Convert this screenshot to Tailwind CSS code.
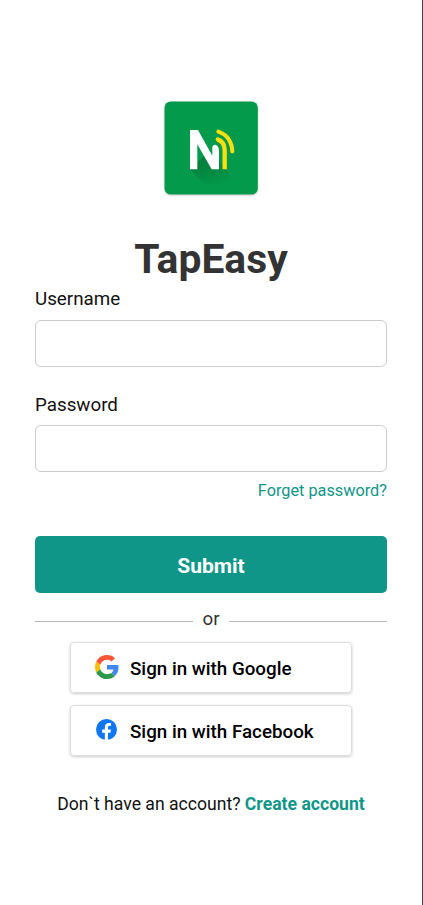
<!DOCTYPE html>
<html lang="en">
<head>
    <meta charset="UTF-8">
    <meta name="viewport" content="width=device-width, initial-scale=1.0">
    <title>TapEasy</title>
    <script src="https://cdn.jsdelivr.net/npm/@tailwindcss/browser@4"></script>
</head>
<body class="bg-white font-['Roboto',sans-serif] text-[#111]">
    <main class="h-[905px] border-r border-[#444] px-[35px] pt-[101px] flex flex-col overflow-hidden">
        <svg class="w-[94px] h-[94px] ml-[129px] shrink-0 drop-shadow-[0_1px_1px_rgba(0,0,0,0.2)]" viewBox="27 27 282 282">
            <defs>
                <linearGradient id="shade" gradientUnits="userSpaceOnUse" x1="150" y1="190" x2="185" y2="285">
                    <stop offset="0" stop-color="#037a3a"/>
                    <stop offset="1" stop-color="#049a4b"/>
                </linearGradient>
            </defs>
            <rect x="28.5" y="28.5" width="280" height="279" rx="19" fill="#049a4b"/>
            <path d="M105 232L150 278H240L215 232L160 180Z" fill="url(#shade)"/>
            <path d="M105 114H129L172 191V164Q175 157 182 159Q192 162 192 178V232H170L127 157V232H105Z" fill="#fff"/>
            <path d="M187 142Q209 149 209 174V232" fill="none" stroke="#fce00d" stroke-width="13"/>
            <circle cx="188" cy="142" r="6" fill="#fce00d"/>
            <path d="M190 119Q229 132 232 178" fill="none" stroke="#fce00d" stroke-width="12" stroke-linecap="round"/>
        </svg>
        <h1 class="mt-[40px] h-[48px] text-center text-[40.8px] leading-[48px] font-bold text-[#333]">TapEasy</h1>
        <form>
            <label for="username" class="block mt-[5px] text-[18.8px] leading-[22px]">Username</label>
            <input id="username" type="text" class="block w-full h-[47px] mt-[10px] px-3 border border-[#ccc] rounded-[6px]">
            <label for="password" class="block mt-[27px] text-[18.8px] leading-[22px]">Password</label>
            <input id="password" type="password" class="block w-full h-[47px] mt-[9px] px-3 border border-[#ccc] rounded-[6px]">
            <a href="#" class="block mt-[9px] text-right text-[16.3px] leading-[20px] text-[#0f9688]">Forget password?</a>
            <button type="button" class="block w-full h-[57px] mt-[35px] pt-[4px] rounded-[5px] bg-[#0f9688] text-white text-[21px] font-bold">Submit</button>
        </form>
        <div class="flex items-center mt-[14px] h-[24px] text-[18.8px] text-[#333]">
            <span class="w-[158px] h-px mt-[5px] bg-[#b5b5b5]"></span>
            <span class="flex-1 text-center">or</span>
            <span class="w-[158px] h-px mt-[5px] bg-[#b5b5b5]"></span>
        </div>
        <div class="flex flex-col gap-3 mt-[11px] mx-[35px] text-[18.8px] font-medium text-black">
            <button type="button" class="flex items-center h-[51px] pl-[24px] border border-[#ddd] rounded-[4px] shadow-[0_1px_3px_rgba(0,0,0,0.2)]">
                <svg class="w-[24px] h-[24px] mr-[11px] mb-[2px]" viewBox="0 0 48 48">
                    <path fill="#fa5537" d="M24 9.5c3.54 0 6.71 1.22 9.21 3.6l6.85-6.85C35.9 2.38 30.47 0 24 0 14.62 0 6.51 5.38 2.56 13.22l7.98 6.19C12.43 13.72 17.74 9.5 24 9.5z"/>
                    <path fill="#4285f4" d="M46.98 24.55c0-1.57-.15-3.09-.38-4.55H24v9.02h12.94c-.58 2.96-2.26 5.48-4.78 7.18l7.73 6c4.51-4.18 7.09-10.36 7.09-17.65z"/>
                    <path fill="#fbbc05" d="M10.53 28.59c-.48-1.45-.76-2.99-.76-4.59s.27-3.14.76-4.59l-7.98-6.19C.92 16.46 0 20.12 0 24c0 3.88.92 7.54 2.56 10.78l7.97-6.19z"/>
                    <path fill="#2a9a48" d="M24 48c6.48 0 11.93-2.13 15.89-5.81l-7.73-6c-2.15 1.45-4.92 2.3-8.16 2.3-6.26 0-11.57-4.22-13.47-9.91l-7.98 6.19C6.51 42.62 14.62 48 24 48z"/>
                </svg>
                <span class="pt-[3px]">Sign in with Google</span>
            </button>
            <button type="button" class="flex items-center h-[51px] pl-[25px] border border-[#ddd] rounded-[4px] shadow-[0_1px_3px_rgba(0,0,0,0.2)]">
                <svg class="w-[21px] h-[21px] mr-[13px] mb-[2px]" viewBox="0 0 24 24">
                    <circle cx="12" cy="12" r="12" fill="#0f77f5"/>
                    <path fill="#fff" d="M10.1 24V15.6H7V12h3.1V9.4c0-3.2 1.9-4.9 4.7-4.9 1.3 0 2.4.2 2.4.2v3h-1.5c-1.5 0-2 .9-2 1.9V12h3.4l-.6 3.6h-2.8V24z"/>
                </svg>
                <span class="pt-[3px]">Sign in with Facebook</span>
            </button>
        </div>
        <p class="mt-[38px] text-center text-[17.6px] leading-[20px] whitespace-nowrap">Don`t have an account? <a href="#" class="font-bold text-[#0f9688]">Create account</a></p>
    </main>
</body>
</html>
